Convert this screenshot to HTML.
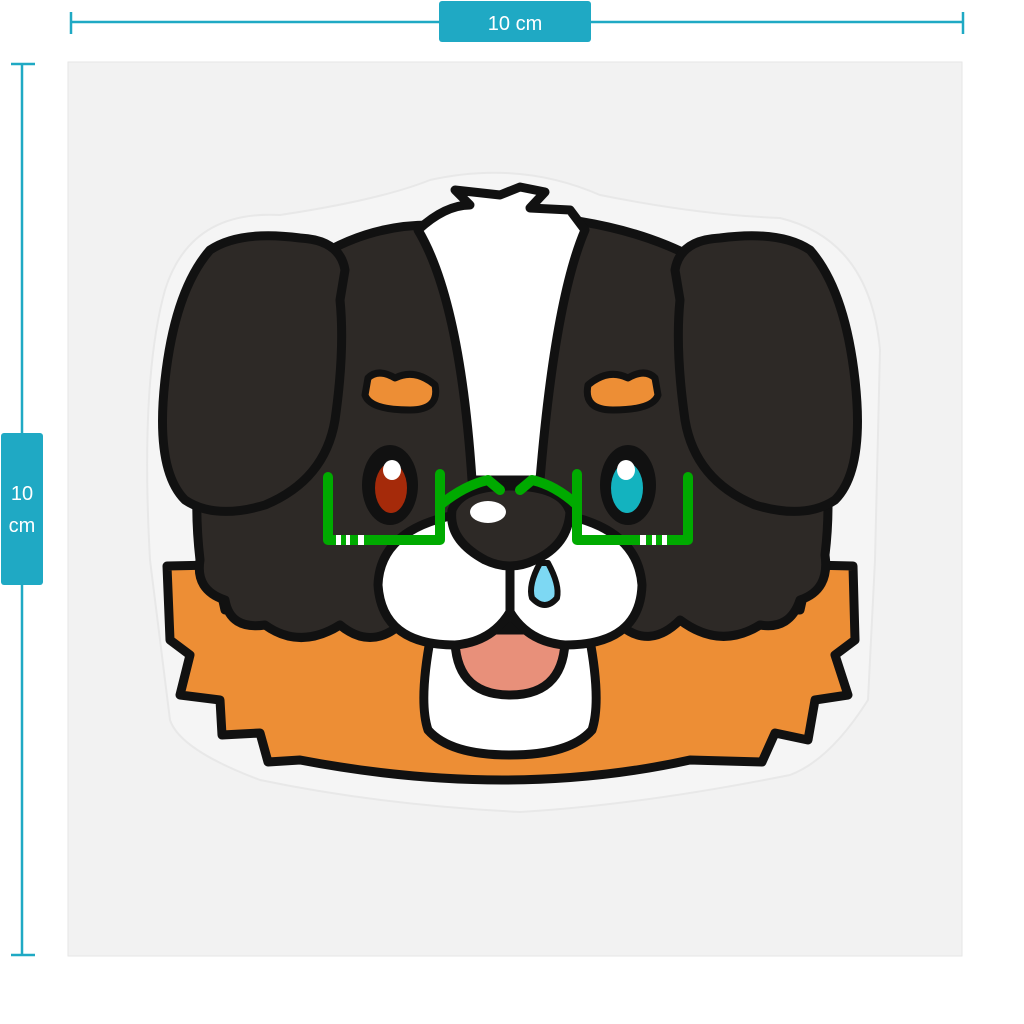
<!DOCTYPE html>
<html><head><style>
html,body{margin:0;padding:0;background:#fff;width:1024px;height:1024px;overflow:hidden}
</style></head><body>
<svg width="1024" height="1024" viewBox="0 0 1024 1024" xmlns="http://www.w3.org/2000/svg">
<rect width="1024" height="1024" fill="#fff"/>
<rect x="68" y="62" width="894" height="894" fill="#f2f2f2" stroke="#e6e6e6"/>
<g stroke="#1fa9c4" stroke-width="2.5">
<line x1="71" y1="22" x2="963" y2="22"/><line x1="71" y1="12" x2="71" y2="34"/><line x1="963" y1="12" x2="963" y2="34"/>
<line x1="22" y1="64" x2="22" y2="955"/><line x1="11" y1="64" x2="35" y2="64"/><line x1="11" y1="955" x2="35" y2="955"/>
</g>
<rect x="439" y="1" width="152" height="41" rx="3" fill="#1fa9c4"/>
<text x="515" y="30" font-family="Liberation Sans, sans-serif" font-size="20" fill="#fff" text-anchor="middle">10 cm</text>
<rect x="1" y="433" width="42" height="152" rx="3" fill="#1fa9c4"/>
<text x="22" y="500" font-family="Liberation Sans, sans-serif" font-size="20" fill="#fff" text-anchor="middle">10</text>
<text x="22" y="532" font-family="Liberation Sans, sans-serif" font-size="20" fill="#fff" text-anchor="middle">cm</text>
<path d="M150 560 Q140 380 165 290 Q190 210 280 215 Q380 200 430 180 Q520 160 600 195 Q700 215 780 218 Q870 240 880 350 L875 560 L868 700 Q830 760 790 775 Q640 805 520 812 Q380 805 260 780 Q180 750 170 720 Z" fill="#f5f5f5" stroke="#e8e8e8" stroke-width="2"/>
<g stroke="#111" stroke-width="9" stroke-linejoin="round" stroke-linecap="round">
<path d="M167 566 L215 565 L225 610 L800 610 L810 565 L853 566 L855 640 L835 655 L848 695 L815 700 L808 740 L775 733 L762 762 L690 760 Q510 800 300 760 L268 762 L260 733 L222 735 L220 700 L180 695 L190 655 L170 640 Z" fill="#ed8e35"/>
<path d="M200 560 Q185 430 240 330 Q320 225 430 225 L520 215 Q700 225 780 330 Q840 430 825 555 Q830 590 800 600 Q790 630 760 625 Q720 650 680 620 Q650 650 620 625 L400 625 Q370 650 340 625 Q300 650 265 625 Q230 630 225 600 Q195 590 200 560 Z" fill="#2d2926"/>
<path d="M418 230 Q445 205 470 205 L455 190 L500 195 L520 187 L545 192 L530 208 L570 210 L585 230 Q555 300 540 480 L472 480 Q460 300 418 230 Z" fill="#fff"/>
<path d="M345 270 Q340 240 300 238 Q240 230 210 250 Q175 290 165 380 Q155 470 185 500 Q215 520 265 505 Q325 480 335 420 Q345 350 340 300 Z" fill="#2d2926"/>
<path d="M675 270 Q680 240 720 238 Q780 230 810 250 Q845 290 855 380 Q865 470 835 500 Q805 520 755 505 Q695 480 685 420 Q675 350 680 300 Z" fill="#2d2926"/>
<path d="M368 378 Q378 368 395 378 Q415 368 435 385 Q440 410 410 410 Q370 410 365 395 Z" fill="#ed8e35" stroke-width="7"/>
<path d="M655 378 Q645 368 628 378 Q608 368 588 385 Q583 410 613 410 Q653 410 658 395 Z" fill="#ed8e35" stroke-width="7"/>
<ellipse cx="390" cy="485" rx="28" ry="40" fill="#111" stroke="none"/>
<ellipse cx="391" cy="488" rx="16" ry="25" fill="#a52a0a" stroke="none"/>
<ellipse cx="392" cy="470" rx="9" ry="10" fill="#fff" stroke="none"/>
<ellipse cx="628" cy="485" rx="28" ry="40" fill="#111" stroke="none"/>
<ellipse cx="627" cy="488" rx="16" ry="25" fill="#13b3bf" stroke="none"/>
<ellipse cx="626" cy="470" rx="9" ry="10" fill="#fff" stroke="none"/>
<!-- mouth (behind cheeks) -->
<path d="M432 630 Q418 700 428 730 Q450 755 510 755 Q570 755 592 730 Q602 700 588 630 Z" fill="#fff"/>
<path d="M455 630 Q452 695 510 695 Q568 695 565 630 Z" fill="#e8907a"/>
<!-- cheeks -->
<path d="M455 515 Q380 530 378 585 Q382 645 455 645 Q492 642 510 612 Q528 642 565 645 Q640 645 642 585 Q638 530 565 515 Z" fill="#fff"/>
<line x1="510" y1="560" x2="510" y2="612"/>
<!-- nose -->
<path d="M452 510 Q462 486 510 486 Q562 486 570 512 Q568 545 535 560 Q510 572 485 560 Q448 540 452 510 Z" fill="#2d2926"/>
<ellipse cx="488" cy="512" rx="18" ry="11" fill="#fff" stroke="none"/>
<path d="M540 563 Q528 585 532 598 Q545 612 557 598 Q560 585 548 563 Z" fill="#7dd8f3" stroke-width="6"/>
</g>
<g stroke="#00aa00" stroke-width="10" fill="none" stroke-linecap="round" stroke-linejoin="round">
<path d="M328 477 V540 H440 V474"/>
<path d="M440 505 Q465 485 488 480 L500 490 M520 490 L532 480 Q555 485 577 505"/>
<path d="M577 474 V540 H688 V477"/>
</g>
<g fill="#fff">
<rect x="336" y="535" width="5" height="10"/><rect x="346" y="535" width="4" height="10"/><rect x="358" y="535" width="6" height="10"/>
<rect x="640" y="535" width="6" height="10"/><rect x="652" y="535" width="4" height="10"/><rect x="662" y="535" width="5" height="10"/>
</g>
</svg>
</body></html>
